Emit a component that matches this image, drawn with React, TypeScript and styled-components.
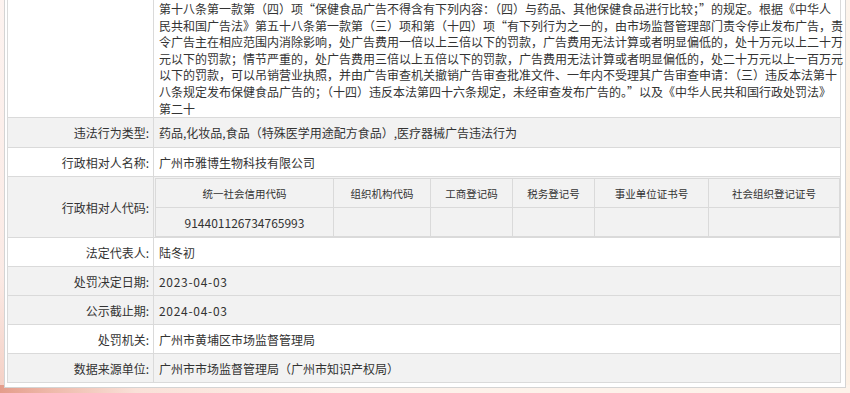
import React from "react";
import styled, { createGlobalStyle } from "styled-components";

const GlobalStyle = createGlobalStyle`
  html, body {
    margin: 0;
    padding: 0;
  }
  body {
    height: 393px;
    overflow: hidden;
    font-family: "Noto Sans CJK SC", "Noto Sans", sans-serif;
    color: #333;
    background:
      linear-gradient(to right, #e49d8b 0%, #eeb9aa 6%, #f9e1d8 16%, #fdf1ea 40%, #fdf3ea 100%) left bottom / 100% 8px no-repeat,
      linear-gradient(to bottom, #fdf3f0 0%, #fbeae5 70%, #f4cfc4 100%) left top / 4px 100% no-repeat,
      linear-gradient(to bottom, #fdf4ec 0%, #fcebd6 70%, #fdf1e6 100%);
  }
`;

const Panel = styled.div`
  box-sizing: border-box;
  width: 842px;
  margin: -8px 0 0 4px;
  padding: 2px 4px 4px 2px;
  background: #fff;
  border: 1px solid #d4d4d4;
`;

const Sheet = styled.div`
  border-left: 1px solid #dadada;
  border-right: 1px solid #dadada;
  font-size: 12px;
`;

const Row = styled.div<{ $shade?: boolean; $tall?: boolean }>`
  display: grid;
  grid-template-columns: 146px 1fr;
  min-height: ${(p) => (p.$tall ? "29px" : "28px")};
  border-bottom: 1px solid #dadada;
  background: ${(p) => (p.$shade ? "#f2f2f2" : "#fff")};
`;

const Label = styled.div`
  box-sizing: border-box;
  display: flex;
  align-items: center;
  justify-content: flex-end;
  padding-right: 4px;
  border-right: 1px solid #dadada;
  white-space: nowrap;
`;

const Value = styled.div<{ $flush?: boolean; $spaced?: boolean }>`
  display: flex;
  align-items: center;
  padding: ${(p) => (p.$flush ? "1px 0 0 1px" : "0 0 0 5px")};
  letter-spacing: ${(p) => (p.$spaced ? "0.7px" : "normal")};
  white-space: nowrap;
`;

const Paragraph = styled.div`
  padding: 6px 0 0 5px;
  line-height: 16.6px;
`;

const Line = styled.span`
  display: block;
  white-space: nowrap;
`;

const CodeGrid = styled.div`
  display: grid;
  grid-template-columns: 178px 97px 82px 82px 114px 1fr;
  grid-auto-rows: 29px;
  width: 100%;
  border-right: 1px solid #dadada;
  border-bottom: 1px solid #dadada;
  background: #f2f2f2;
`;

const CodeCell = styled.div<{ $head?: boolean }>`
  display: flex;
  align-items: center;
  justify-content: center;
  border-left: 1px solid #dadada;
  border-top: 1px solid #dadada;
  font-size: ${(p) => (p.$head ? "10.5px" : "12px")};
  color: #333;
`;

const basisLines = [
  "第十八条第一款第（四）项“保健食品广告不得含有下列内容：（四）与药品、其他保健食品进行比较；”的规定。根据《中华人",
  "民共和国广告法》第五十八条第一款第（三）项和第（十四）项“有下列行为之一的，由市场监督管理部门责令停止发布广告，责",
  "令广告主在相应范围内消除影响，处广告费用一倍以上三倍以下的罚款，广告费用无法计算或者明显偏低的，处十万元以上二十万",
  "元以下的罚款；情节严重的，处广告费用三倍以上五倍以下的罚款，广告费用无法计算或者明显偏低的，处二十万元以上一百万元",
  "以下的罚款，可以吊销营业执照，并由广告审查机关撤销广告审查批准文件、一年内不受理其广告审查申请：（三）违反本法第十",
  "八条规定发布保健食品广告的；（十四）违反本法第四十六条规定，未经审查发布广告的。”以及《中华人民共和国行政处罚法》",
  "第二十",
];

const codeHeads = [
  "统一社会信用代码",
  "组织机构代码",
  "工商登记码",
  "税务登记号",
  "事业单位证书号",
  "社会组织登记证号",
];

const codeValues = ["914401126734765993", "", "", "", "", ""];

type Field = { label: string; value: string; shade: boolean; date?: boolean };

const tailFields: Field[] = [
  { label: "法定代表人:", value: "陆冬初", shade: false },
  { label: "处罚决定日期:", value: "2023-04-03", shade: true, date: true },
  { label: "公示截止期:", value: "2024-04-03", shade: true, date: true },
  { label: "处罚机关:", value: "广州市黄埔区市场监督管理局", shade: false },
  { label: "数据来源单位:", value: "广州市市场监督管理局（广州市知识产权局）", shade: true },
];

export default function App() {
  return (
    <>
      <GlobalStyle />
      <Panel>
        <Sheet lang="zh-CN">
          <Row>
            <Label />
            <Paragraph>
              {basisLines.map((line) => (
                <Line key={line}>{line}</Line>
              ))}
            </Paragraph>
          </Row>
          <Row $shade $tall>
            <Label>违法行为类型:</Label>
            <Value>药品,化妆品,食品（特殊医学用途配方食品）,医疗器械广告违法行为</Value>
          </Row>
          <Row>
            <Label>行政相对人名称:</Label>
            <Value>广州市雅博生物科技有限公司</Value>
          </Row>
          <Row $shade>
            <Label>行政相对人代码:</Label>
            <Value $flush>
              <CodeGrid>
                {codeHeads.map((h) => (
                  <CodeCell key={h} $head>
                    {h}
                  </CodeCell>
                ))}
                {codeValues.map((v, i) => (
                  <CodeCell key={i}>{v}</CodeCell>
                ))}
              </CodeGrid>
            </Value>
          </Row>
          {tailFields.map((f) => (
            <Row key={f.label} $shade={f.shade}>
              <Label>{f.label}</Label>
              <Value $spaced={f.date}>{f.value}</Value>
            </Row>
          ))}
        </Sheet>
      </Panel>
    </>
  );
}
